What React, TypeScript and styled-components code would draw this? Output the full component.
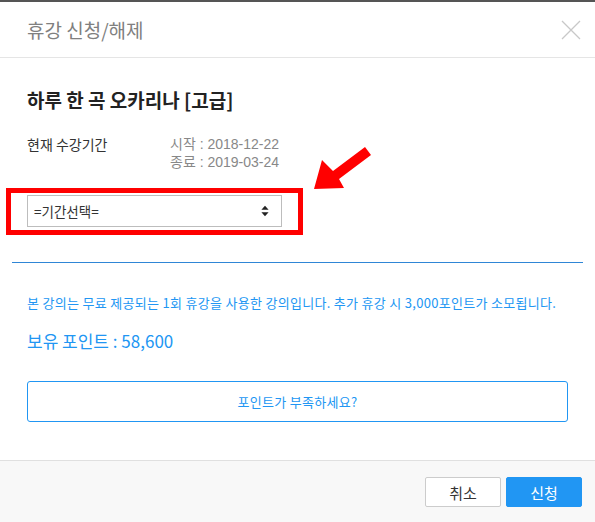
import React from 'react'
import styled, { createGlobalStyle } from 'styled-components'

const GlobalStyle = createGlobalStyle`
  html, body {
    margin: 0;
    padding: 0;
    background: #fff;
  }
  body {
    font-family: "Noto Sans CJK KR", "Noto Sans", sans-serif;
    color: #333;
  }
`

const BLUE = '#2196f3'

const App = () => {
  return (
    <>
      <GlobalStyle />
      <Modal>
        <Header>
          <HeaderTitle>휴강 신청/해제</HeaderTitle>
          <CloseButton aria-label="닫기">
            <svg width="20" height="20" viewBox="0 0 20 20">
              <path d="M1 1 L19 19 M19 1 L1 19" stroke="#c8c8c8" strokeWidth="1.3" fill="none" />
            </svg>
          </CloseButton>
        </Header>

        <Body>
          <CourseTitle>하루 한 곡 오카리나 [고급]</CourseTitle>

          <PeriodRow>
            <PeriodLabel>현재 수강기간</PeriodLabel>
            <DateList>
              <DateLine>시작 : 2018-12-22</DateLine>
              <DateLine>종료 : 2019-03-24</DateLine>
            </DateList>
          </PeriodRow>

          <SelectWrap>
            <SelectBox>
              <span>=기간선택=</span>
              <svg width="8" height="12" viewBox="0 0 8 12">
                <path d="M4 0.8 L7.6 4.8 L0.4 4.8 Z M0.4 7.2 L7.6 7.2 L4 11.2 Z" fill="#222" />
              </svg>
            </SelectBox>
            <RedFrame />
          </SelectWrap>

          <Divider />

          <Notice>본 강의는 무료 제공되는 1회 휴강을 사용한 강의입니다. 추가 휴강 시 3,000포인트가 소모됩니다.</Notice>
          <Points>보유 포인트 : 58,600</Points>

          <OutlineButton>포인트가 부족하세요?</OutlineButton>
        </Body>

        <Footer>
          <FooterButton>취소</FooterButton>
          <FooterButton primary>신청</FooterButton>
        </Footer>

        <Arrow width="70" height="60" viewBox="0 0 70 60">
          <path d="M53 1 L59 9 L27 33 L32 42 L2 43 L10 14 L21 25 Z" fill="#ff0000" />
        </Arrow>
      </Modal>
    </>
  )
}

const Modal = styled.div`
  position: relative;
  width: 595px;
  height: 522px;
  box-sizing: border-box;
  border-top: 2px solid #555;
  display: flex;
  flex-direction: column;
  overflow: hidden;
`

const Header = styled.div`
  height: 56px;
  box-sizing: border-box;
  border-bottom: 1px solid #e5e5e5;
  padding: 0 14px 0 27px;
  display: flex;
  align-items: center;
  justify-content: space-between;
`

const HeaderTitle = styled.h1`
  margin: 0;
  font-size: 19px;
  font-weight: 400;
  color: #808080;
  line-height: 24px;
`

const CloseButton = styled.button`
  border: 0;
  background: none;
  padding: 0;
  width: 20px;
  height: 20px;
  display: flex;
`

const Body = styled.div`
  flex: 1;
  padding: 30px 27px 0;
  display: flex;
  flex-direction: column;
`

const CourseTitle = styled.h2`
  margin: 0;
  font-size: 19px;
  font-weight: 700;
  color: #222;
  line-height: 24px;
`

const PeriodRow = styled.div`
  margin-top: 23px;
  display: flex;
  font-size: 14px;
  line-height: 18px;
`

const PeriodLabel = styled.div`
  width: 143px;
  color: #333;
`

const DateList = styled.div`
  display: flex;
  flex-direction: column;
  color: #888;
`

const DateLine = styled.div`
  height: 18px;
  font-family: "Liberation Sans", "Noto Sans CJK KR", sans-serif;
  font-size: 14px;
  line-height: 18px;
`

const SelectWrap = styled.div`
  position: relative;
  margin-top: 24px;
  width: 255px;
`

const SelectBox = styled.div`
  height: 32px;
  box-sizing: border-box;
  border: 1px solid #bdbdbd;
  padding: 0 12px 0 6px;
  display: flex;
  align-items: center;
  justify-content: space-between;
  font-size: 13.5px;
  color: #333;
`

const RedFrame = styled.div`
  position: absolute;
  left: -21px;
  top: -7px;
  width: 297px;
  height: 47px;
  box-sizing: border-box;
  border: 5px solid #ff0000;
  pointer-events: none;
`

const Divider = styled.hr`
  margin: 35px -15px 0;
  border: 0;
  border-top: 1px solid #2f86d6;
  height: 0;
`

const Notice = styled.p`
  margin: 31px 0 0;
  font-size: 13px;
  letter-spacing: 0.3px;
  line-height: 18px;
  color: ${BLUE};
  white-space: nowrap;
`

const Points = styled.p`
  margin: 18px 0 0;
  font-size: 17px;
  line-height: 22px;
  color: ${BLUE};
`

const OutlineButton = styled.button`
  margin-top: 29px;
  height: 41px;
  width: 100%;
  border: 1px solid ${BLUE};
  border-radius: 3px;
  background: #fff;
  font-family: inherit;
  font-size: 13px;
  letter-spacing: 0.3px;
  color: ${BLUE};
`

const Footer = styled.div`
  height: 62px;
  box-sizing: border-box;
  border-top: 1px solid #e0e0e0;
  background: #f8f8f8;
  padding: 16px 13px 0 0;
  display: flex;
  justify-content: flex-end;
  align-items: flex-start;
  gap: 5px;
`

const FooterButton = styled.button<{ primary?: boolean }>`
  width: 76px;
  height: 30px;
  border-radius: 2px;
  font-family: inherit;
  font-size: 15px;
  padding: 0;
  border: 1px solid ${(p) => (p.primary ? BLUE : '#ccc')};
  background: ${(p) => (p.primary ? BLUE : '#fff')};
  color: ${(p) => (p.primary ? '#fff' : '#333')};
`

const Arrow = styled.svg`
  position: absolute;
  left: 312px;
  top: 144px;
`

export default App
